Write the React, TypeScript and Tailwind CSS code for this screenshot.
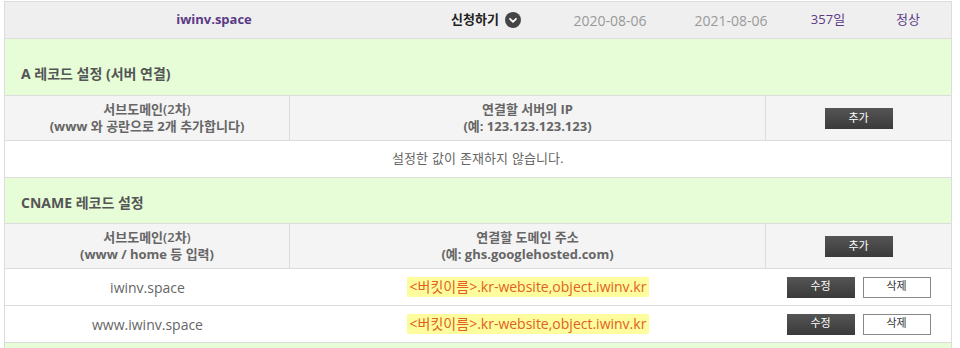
import React from "react";

const latin = "font-['Open_Sans','Noto_Sans_CJK_KR',sans-serif]";
const gothic = "font-['DejaVu_Sans','Noto_Sans_CJK_KR',sans-serif]";

function Chevron() {
  return (
    <svg width="16" height="16" viewBox="0 0 16 16" className="ml-1.5">
      <circle cx="8" cy="8" r="8" fill="#454545" />
      <path d="M5 6.8 L8 9.8 L11 6.8" fill="none" stroke="#fff" strokeWidth="1.8" strokeLinecap="round" strokeLinejoin="round" />
    </svg>
  );
}

function DarkButton({ label }: { label: string }) {
  return (
    <button className={`${gothic} h-[21px] w-[68px] bg-gradient-to-b from-[#555] to-[#3a3a3a] text-[11px] font-normal text-white`}>
      {label}
    </button>
  );
}

function SectionTitle({ title, tall }: { title: string; tall?: boolean }) {
  return (
    <div className={`border-b border-[#dcdcdc] bg-[#e6fdd8] px-4 ${tall ? "pt-[25px] pb-[11px]" : "pt-[15px] pb-[10px]"}`}>
      <h3 className="text-[14px] leading-5 font-bold text-[#555]">{title}</h3>
    </div>
  );
}

function HeaderRow({ left, leftSub, mid, midSub }: { left: string; leftSub: string; mid: string; midSub: string }) {
  return (
    <div className="grid h-[45px] grid-cols-[285px_476px_1fr] border-b border-[#dcdcdc] bg-[#f4f4f4] text-[13px] leading-[17px] font-bold text-[#666]">
      <div className="flex flex-col items-center justify-center border-r border-[#dcdcdc]">
        <span className="font-semibold">{left}</span>
        <span>{leftSub}</span>
      </div>
      <div className="flex flex-col items-center justify-center border-r border-[#dcdcdc]">
        <span>{mid}</span>
        <span>{midSub}</span>
      </div>
      <div className="flex items-center justify-center">
        <DarkButton label="추가" />
      </div>
    </div>
  );
}

function RecordRow({ host, target }: { host: string; target: string }) {
  return (
    <div className="grid h-[37px] grid-cols-[285px_476px_1fr] border-b border-[#dcdcdc] bg-white text-[14px] text-[#666]">
      <div className="flex items-center justify-center">{host}</div>
      <div className="flex items-center justify-center">
        <span className="bg-[#fdfd9e] px-[3px] leading-5 text-[#e2601f]">{target}</span>
      </div>
      <div className="flex items-center justify-center gap-2">
        <DarkButton label="수정" />
        <button className={`${gothic} h-[21px] w-[68px] border border-[#888] bg-white text-[11px] text-[#333]`}>삭제</button>
      </div>
    </div>
  );
}

export default function App() {
  return (
    <div className={`${latin} h-[348px] overflow-hidden bg-white pt-px pr-2 pl-1`}>
      <div className="border-x border-t border-[#dcdcdc]">
        {/* domain summary */}
        <div className="grid h-[37px] grid-cols-[418px_126px_122px_120px_74px_1fr] items-center border-b border-[#dcdcdc] bg-[#efefef] text-[13px]">
          <div className="text-center font-bold text-[#5b3b86]">iwinv.space</div>
          <div className="flex items-center justify-center font-bold text-[#222]">
            신청하기
            <Chevron />
          </div>
          <div className="text-center text-[14px] text-[#999]">2020-08-06</div>
          <div className="text-center text-[14px] text-[#999]">2021-08-06</div>
          <div className="text-center text-[#5b3b86]">357일</div>
          <div className="text-center text-[#5b3b86]">정상</div>
        </div>

        {/* A record */}
        <SectionTitle title="A 레코드 설정 (서버 연결)" tall />
        <HeaderRow left="서브도메인(2차)" leftSub="(www 와 공란으로 2개 추가합니다)" mid="연결할 서버의 IP" midSub="(예: 123.123.123.123)" />
        <div className={`${gothic} flex h-[37px] items-center justify-center border-b border-[#dcdcdc] bg-white text-[13px] text-[#666]`}>
          설정한 값이 존재하지 않습니다.
        </div>

        {/* CNAME record */}
        <SectionTitle title="CNAME 레코드 설정" />
        <HeaderRow left="서브도메인(2차)" leftSub="(www / home 등 입력)" mid="연결할 도메인 주소" midSub="(예: ghs.googlehosted.com)" />
        <RecordRow host="iwinv.space" target="<버킷이름>.kr-website,object.iwinv.kr" />
        <RecordRow host="www.iwinv.space" target="<버킷이름>.kr-website,object.iwinv.kr" />

        <div className="h-10 bg-[#e6fdd8]" />
      </div>
    </div>
  );
}
